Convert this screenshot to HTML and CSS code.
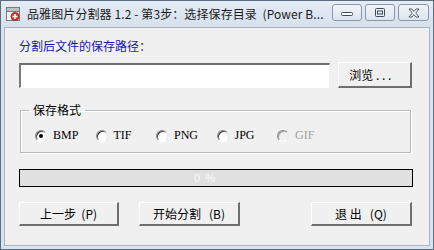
FILE: index.html
```html
<!DOCTYPE html>
<html lang="zh-CN">
<head>
  <meta charset="UTF-8" />
  <title>品雅图片分割器</title>
  <link rel="stylesheet" href="styles.css">
</head>
<body>
  <div class="window">
    <div class="titlebar">
      <svg class="app-icon" viewBox="0 0 16 16" width="16" height="16">
        <rect x="1.5" y="1.5" width="13" height="13" fill="#f4f4f4" stroke="#7a7a7a"/>
        <rect x="2" y="2" width="12" height="3" fill="#b9c3cc"/>
        <line x1="2" y1="5.5" x2="14" y2="5.5" stroke="#7a7a7a"/>
        <circle cx="10" cy="10.5" r="4" fill="#e23b2e" stroke="#b02018"/>
        <path d="M10 8v5M7.5 10.5h5" stroke="#fff" stroke-width="1.6"/>
      </svg>
      <span class="title-text">品雅图片分割器 1.2 - 第3步：选择保存目录&nbsp; (Power B...</span>
      <div class="win-btns">
        <span class="win-btn">
          <svg viewBox="0 0 12 8" width="12" height="8"><rect x="0.5" y="3.5" width="11" height="3" rx="1" fill="#fff" stroke="#3c4a5a"/></svg>
        </span>
        <span class="win-btn">
          <svg viewBox="0 0 10 9" width="10" height="9"><rect x="0.5" y="0.5" width="9" height="8" rx="1" fill="none" stroke="#3c4a5a"/><rect x="2.5" y="3" width="5" height="3" fill="none" stroke="#3c4a5a"/></svg>
        </span>
        <span class="win-btn close">
          <svg viewBox="0 0 12 10" width="12" height="10"><path d="M1 1h3l2 2.5L8 1h3L7.7 5 11 9H8L6 6.5 4 9H1l3.3-4z" fill="#fff" stroke="#3c4a5a" stroke-width="0.9" stroke-linejoin="round"/></svg>
        </span>
      </div>
    </div>

    <div class="client">
      <div class="path-label">分割后文件的保存路径：</div>
      <div class="path-row">
        <input class="path-input" type="text" />
        <button class="btn browse-btn">浏览 . . .</button>
      </div>

      <fieldset class="format-box">
        <legend>保存格式</legend>
        <div class="radios">
          <label class="radio"><span class="dot checked"></span>BMP</label>
          <label class="radio"><span class="dot"></span>TIF</label>
          <label class="radio"><span class="dot"></span>PNG</label>
          <label class="radio"><span class="dot"></span>JPG</label>
          <label class="radio disabled"><span class="dot"></span>GIF</label>
        </div>
      </fieldset>

      <div class="progress"><span>0 %</span></div>

      <div class="actions">
        <button class="btn action-btn">上一步&nbsp; (P)</button>
        <button class="btn action-btn start-btn">开始分割&nbsp;&nbsp; (B)</button>
        <button class="btn action-btn quit-btn">退&nbsp;出&nbsp;&nbsp; (Q)</button>
      </div>
    </div>
  </div>
</body>
</html>
```

FILE: styles.css
```css
html, body {
  margin: 0;
  padding: 0;
}

body {
  width: 434px;
  height: 250px;
  overflow: hidden;
  font-family: "Noto Sans CJK SC", "Liberation Sans", sans-serif;
  font-size: 12px;
}

.window {
  box-sizing: border-box;
  width: 434px;
  height: 250px;
  border: 1px solid #5f6e7e;
  background: #d9e3ee;
  padding: 0 3px 3px 3px;
  display: flex;
  flex-direction: column;
}

.titlebar {
  height: 26px;
  display: flex;
  align-items: center;
  position: relative;
  background: linear-gradient(#e4ecf5, #d6e1ed);
  margin: 0 -3px;
  padding: 0 0 0 4px;
}

.app-icon {
  flex: none;
  margin-right: 6px;
}

.title-text {
  color: #1b1b1b;
  font-size: 12px;
  white-space: nowrap;
  letter-spacing: 0.1px;
  margin-top: -2px;
}

.win-btns {
  position: absolute;
  top: 3px;
  right: 4px;
  display: flex;
  gap: 3px;
}

.win-btn {
  box-sizing: border-box;
  width: 30px;
  height: 17px;
  border: 1px solid #8b98a8;
  border-radius: 3px;
  background: linear-gradient(#f1f5fa, #dce5ef);
  display: flex;
  align-items: center;
  justify-content: center;
}

.win-btn.close {
  width: 31px;
}

.client {
  flex: 1;
  background: #f0f0f0;
  border: 1px solid #a9b5c2;
  padding: 10px 17px 0 14px;
}

.path-label {
  color: #1616b0;
  height: 16px;
  line-height: 16px;
}

.path-row {
  display: flex;
  align-items: flex-start;
  margin-top: 8px;
}

.path-input {
  box-sizing: border-box;
  width: 313px;
  height: 25px;
  margin: 1px 0 0 0;
  padding: 0;
  background: #fff;
  border-style: solid;
  border-width: 2px 1px 1px 2px;
  border-color: #6e6e6e #f0f0f0 #ffffff #7a7a7a;
  outline: none;
}

.btn {
  box-sizing: border-box;
  background: #f0f0f0;
  font-family: "Noto Sans CJK SC", "Liberation Sans", sans-serif;
  font-size: 12px;
  color: #000;
  border-style: solid;
  border-width: 1px 2px 2px 1px;
  border-color: #ffffff #6f6f6f #6f6f6f #ffffff;
  padding: 0;
  margin: 0;
  line-height: 18px;
}

.browse-btn {
  width: 74px;
  height: 26px;
  margin-left: 8px;
  text-align: left;
  padding-left: 10px;
}

.format-box {
  box-sizing: border-box;
  width: 391px;
  height: 50px;
  margin: 15px 0 0 1px;
  padding: 0;
  border: 1px solid #b8bcc0;
  box-shadow: 1px 1px #fff, inset 1px 1px #fff;
}

.format-box legend {
  padding: 0 4px;
  margin-left: 8px;
  line-height: 14px;
}

.radios {
  display: flex;
  padding: 11px 0 0 14px;
}

.radio {
  display: flex;
  align-items: center;
  width: 60.5px;
  flex: none;
  font-family: "Liberation Serif", serif;
  font-size: 12px;
  color: #000;
}

.radio.disabled {
  color: #a0a0a0;
}

.dot {
  box-sizing: border-box;
  width: 12px;
  height: 12px;
  border-radius: 50%;
  border: 1px solid;
  border-color: #8a8a8a #e8e8e8 #ffffff #8a8a8a;
  box-shadow: inset 1px 1px #404040;
  background: #fff;
  margin-right: 6px;
  display: flex;
  align-items: center;
  justify-content: center;
}

.dot.checked::after {
  content: "";
  width: 4px;
  height: 4px;
  border-radius: 50%;
  background: #000;
}

.radio.disabled .dot {
  background: #f0f0f0;
  box-shadow: inset 1px 1px #a0a0a0;
}

.progress {
  box-sizing: border-box;
  width: 394px;
  height: 18px;
  margin-top: 16px;
  border: 1px solid #000;
  background: #e0e0e0;
  display: flex;
  align-items: center;
  justify-content: center;
  color: #fafafa;
  font-family: "Liberation Sans", sans-serif;
  font-size: 11px;
}

.progress span {
  margin-left: -22px;
  letter-spacing: 1px;
}

.actions {
  display: flex;
  margin-top: 15px;
}

.action-btn {
  width: 100px;
  height: 24px;
}

.start-btn {
  width: 101px;
  margin-left: 20px;
}

.quit-btn {
  width: 101px;
  margin-left: auto;
}
```
